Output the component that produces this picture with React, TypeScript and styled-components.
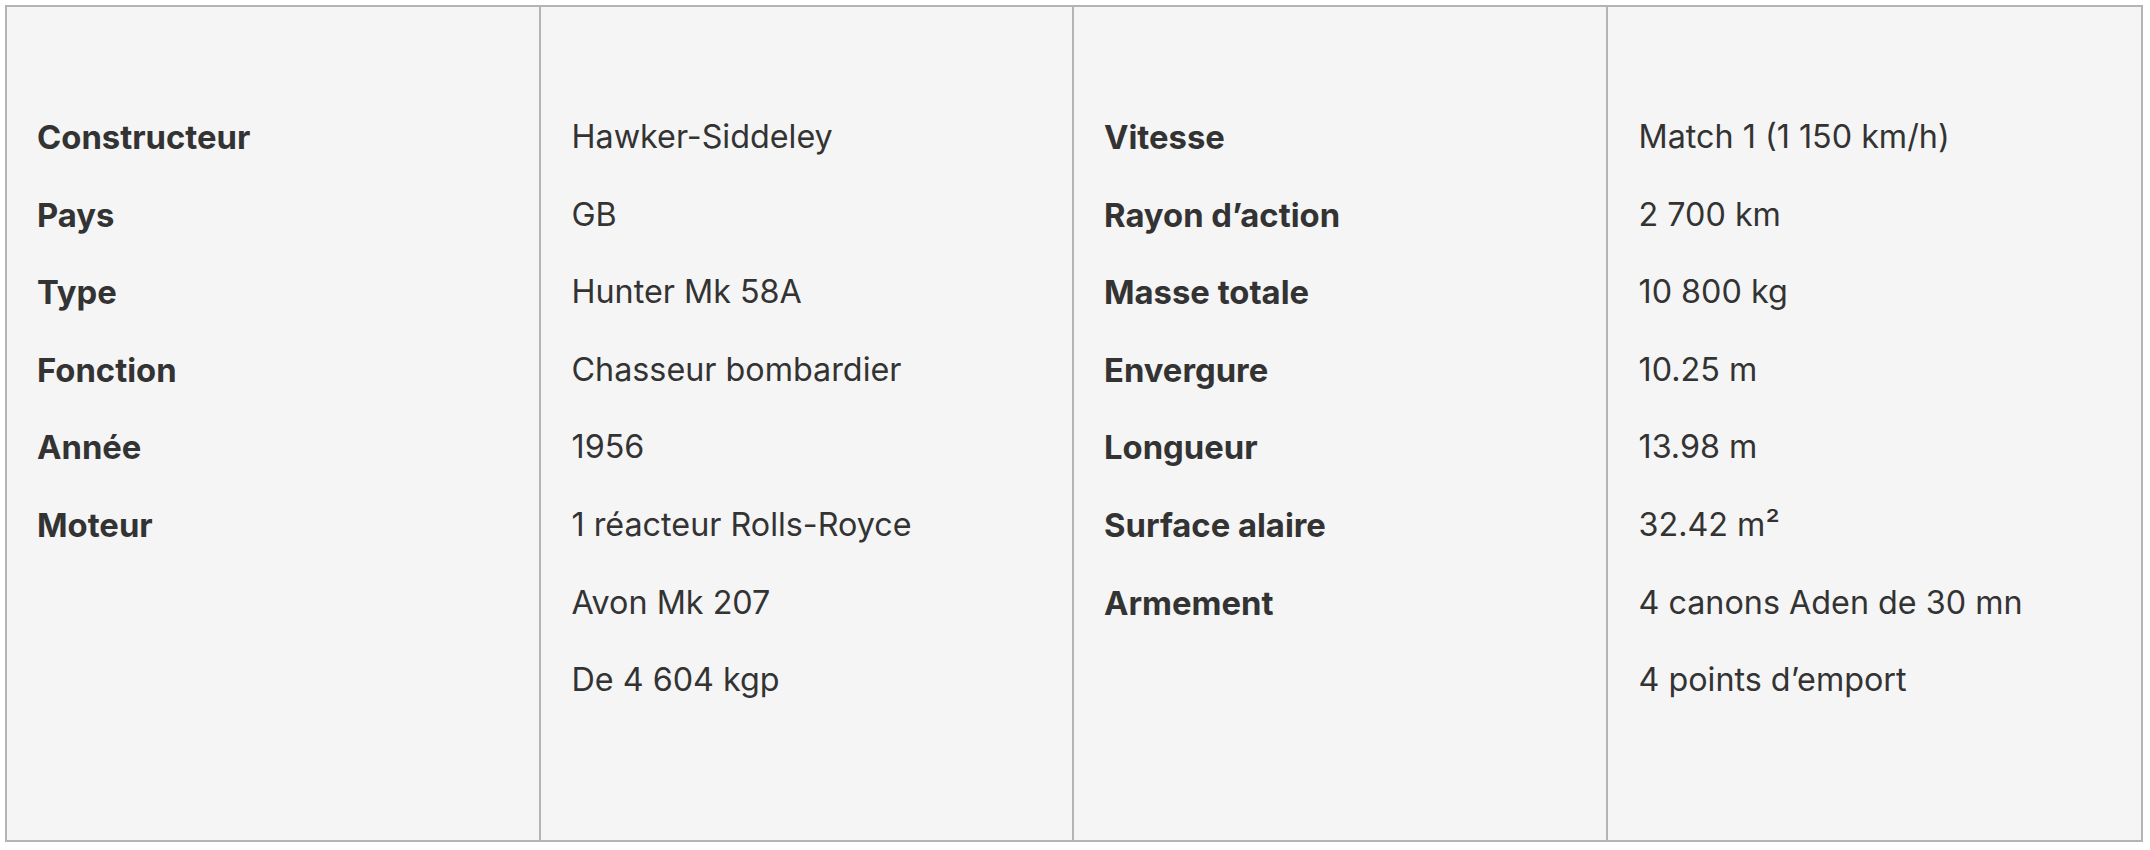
import React from "react";
import styled, { createGlobalStyle } from "styled-components";

const Global = createGlobalStyle`
  html, body { margin: 0; padding: 0; background: #ffffff; }
  body { padding: 5px; font-family: Inter, "Noto Sans", sans-serif; }
`;

const Table = styled.div`
  display: grid;
  grid-template-columns: repeat(4, 1fr);
  width: 2138px;
  box-sizing: border-box;
  border: 2px solid #b4b4b4;
  background: #f5f5f5;
  color: #333333;
`;

const Cell = styled.div<{ $last?: boolean }>`
  display: flex;
  flex-direction: column;
  gap: 29.6px;
  padding: 106px 30px 136px 31px;
  border-right: ${(p) => (p.$last ? "none" : "2px solid #b4b4b4")};
`;

const Line = styled.div<{ $bold?: boolean }>`
  font-size: ${(p) => (p.$bold ? "32.8px" : "32.3px")};
  line-height: 48px;
  font-weight: ${(p) => (p.$bold ? 700 : 400)};
  margin-left: ${(p) => (p.$bold ? "-1px" : "0")};
  white-space: nowrap;
`;

const columns: { bold: boolean; lines: string[] }[] = [
  { bold: true, lines: ["Constructeur", "Pays", "Type", "Fonction", "Année", "Moteur"] },
  {
    bold: false,
    lines: [
      "Hawker-Siddeley",
      "GB",
      "Hunter Mk 58A",
      "Chasseur bombardier",
      "1956",
      "1 réacteur Rolls-Royce",
      "Avon Mk 207",
      "De 4 604 kgp",
    ],
  },
  {
    bold: true,
    lines: ["Vitesse", "Rayon d’action", "Masse totale", "Envergure", "Longueur", "Surface alaire", "Armement"],
  },
  {
    bold: false,
    lines: [
      "Match 1 (1 150 km/h)",
      "2 700 km",
      "10 800 kg",
      "10.25 m",
      "13.98 m",
      "32.42 m²",
      "4 canons Aden de 30 mn",
      "4 points d’emport",
    ],
  },
];

export default function App() {
  return (
    <>
      <Global />
      <Table>
        {columns.map((col, i) => (
          <Cell key={i} $last={i === columns.length - 1}>
            {col.lines.map((l, j) => (
              <Line key={j} $bold={col.bold}>
                {l}
              </Line>
            ))}
          </Cell>
        ))}
      </Table>
    </>
  );
}
